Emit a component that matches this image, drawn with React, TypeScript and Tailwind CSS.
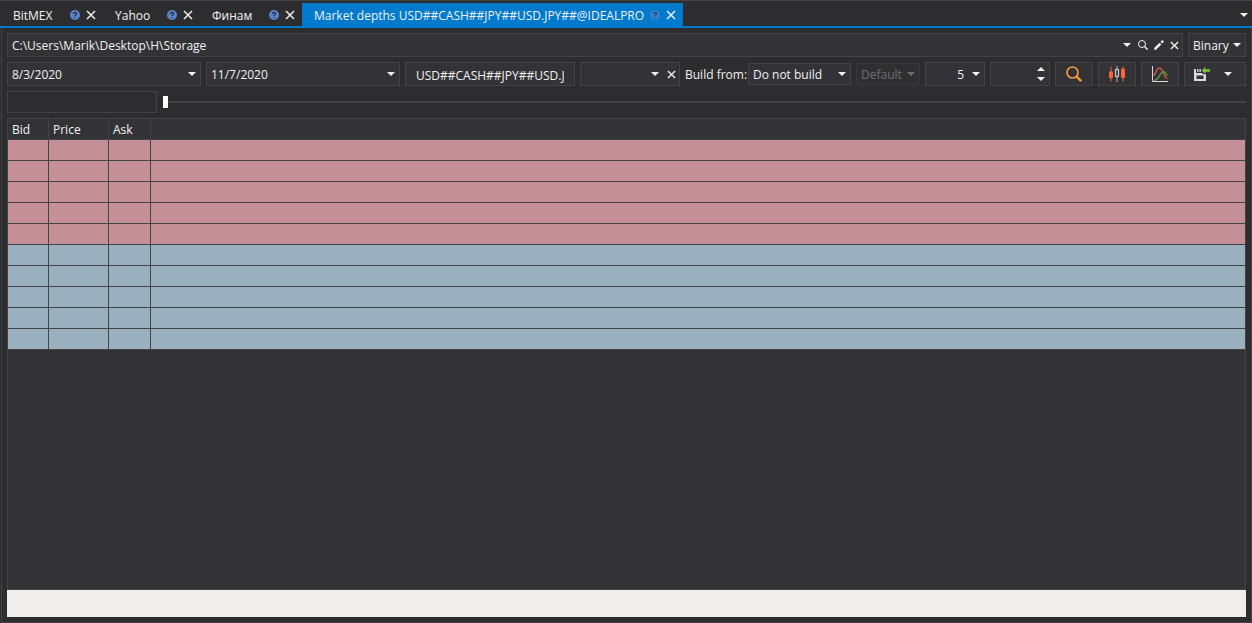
import type { ReactNode } from 'react';

const BOX = 'border border-[#434346] bg-[#333337]';
const FIELD = 'min-w-0 flex-1 bg-transparent pt-0.5 outline-none';

function Caret({ className = '' }: { className?: string }) {
  return (
    <svg className={`h-1 w-2 shrink-0 ${className}`} viewBox="0 0 8 4" fill="currentColor" aria-hidden="true">
      <path d="M0 0h8L4 4z" />
    </svg>
  );
}

function Cross({ className = 'size-[9px]' }: { className?: string }) {
  return (
    <svg className={className} viewBox="0 0 10 10" fill="none" stroke="currentColor" strokeWidth="1.5" aria-hidden="true">
      <path d="M1 1l8 8M9 1L1 9" />
    </svg>
  );
}

function HelpIcon() {
  return (
    <svg className="size-2.5" viewBox="0 0 10 10" aria-hidden="true">
      <circle cx="5" cy="5" r="5" fill="#5b83c9" />
      <path d="M3.4 3.9C3.4 2 6.6 2 6.6 3.8C6.6 4.9 5 4.8 5 6.1M5 6.9v1.2" fill="none" stroke="#252c3d" strokeWidth="1.2" />
    </svg>
  );
}

function Tab({ label, width, active = false }: { label: string; width: string; active?: boolean }) {
  return (
    <div className={`flex h-[23px] items-center pr-[7px] pl-3 ${width} ${active ? 'bg-[#007acc]' : ''}`}>
      <button type="button" role="tab" aria-selected={active} className="min-w-0 flex-1 pt-0.5 text-left whitespace-nowrap">
        {label}
      </button>
      <button type="button" aria-label={`Help: ${label}`} className={`mr-1.5 shrink-0 ${active ? 'opacity-60' : ''}`}>
        <HelpIcon />
      </button>
      <button type="button" aria-label={`Close ${label}`} className="shrink-0">
        <Cross className="size-2.5" />
      </button>
    </div>
  );
}

function DateBox({ label, value }: { label: string; value: string }) {
  return (
    <div className={`flex h-6 min-w-0 flex-1 items-center pr-1 pl-1 ${BOX}`}>
      <input aria-label={label} defaultValue={value} className={FIELD} />
      <button type="button" aria-label={`Open ${label} calendar`}>
        <Caret />
      </button>
    </div>
  );
}

function Select({
  id,
  label,
  options,
  className,
  disabled = false,
}: {
  id: string;
  label?: string;
  options: string[];
  className: string;
  disabled?: boolean;
}) {
  return (
    <div className={`relative shrink-0 ${className}`}>
      <select
        id={id}
        aria-label={label}
        disabled={disabled}
        className="size-full appearance-none bg-transparent pt-0.5 pl-1 outline-none"
      >
        {options.map((o) => (
          <option key={o} className="bg-[#333337]">
            {o}
          </option>
        ))}
      </select>
      <Caret className="pointer-events-none absolute top-1/2 right-1 -translate-y-1/2" />
    </div>
  );
}

function ToolButton({ label, children }: { label: string; children: ReactNode }) {
  return (
    <button type="button" aria-label={label} className={`flex h-6 w-[38px] shrink-0 items-center justify-center ${BOX}`}>
      {children}
    </button>
  );
}

function Tabs() {
  return (
    <header className="flex items-end border-t border-b-2 border-t-[#434346] border-b-[#007acc] pt-0.5 pl-px">
      <div role="tablist" className="flex flex-1">
        <Tab label="BitMEX" width="w-[102px]" />
        <Tab label="Yahoo" width="w-[97px]" />
        <Tab label="Финам" width="w-[102px]" />
        <Tab label="Market depths USD##CASH##JPY##USD.JPY##@IDEALPRO" width="w-[381px]" active />
      </div>
      <button type="button" aria-label="All tabs" className="flex h-[23px] items-center pr-1">
        <Caret />
      </button>
    </header>
  );
}

function StorageRow() {
  return (
    <div className="flex gap-[5px]">
      <div className={`flex h-6 min-w-0 flex-1 items-center pr-[3px] pl-1 ${BOX}`}>
        <input aria-label="Storage path" defaultValue="C:\Users\Marik\Desktop\H\Storage" className={FIELD} />
        <button type="button" aria-label="Recent paths" className="mr-[7px]">
          <Caret />
        </button>
        <button type="button" aria-label="Search" className="mr-1.5">
          <svg className="size-2.5" viewBox="0 0 10 10" fill="none" stroke="currentColor" aria-hidden="true">
            <circle cx="4" cy="4" r="3.5" />
            <path d="M6.6 6.6L9.6 9.6" strokeWidth="1.4" />
          </svg>
        </button>
        <button type="button" aria-label="Edit" className="mr-1.5">
          <svg className="size-2.5" viewBox="0 0 10 10" fill="currentColor" aria-hidden="true">
            <path d="M0 10l.6-2.4L5.6 2.700l1.700 1.700L2.400 9.400zM6.500 1.800L7.900.4c.3-.3.7-.3 1 0l.7.7c.3.3.3.7 0 1L8.200 3.500z" />
          </svg>
        </button>
        <button type="button" aria-label="Clear path">
          <Cross />
        </button>
      </div>
      <Select id="storage-format" label="Storage format" options={['Binary', 'CSV']} className={`h-6 w-[58px] ${BOX}`} />
    </div>
  );
}

function Toolbar() {
  return (
    <div className="flex items-center gap-[5px]">
      <DateBox label="From date" value="8/3/2020" />
      <DateBox label="To date" value="11/7/2020" />
      <input
        aria-label="Security"
        defaultValue="USD##CASH##JPY##USD.JPY##@IDEALPRO"
        className={`h-6 w-[170px] shrink-0 px-2.5 pt-0.5 outline-none ${BOX}`}
      />
      <div className={`flex h-6 w-[100px] shrink-0 items-center pr-[3px] pl-1 ${BOX}`}>
        <input aria-label="Filter" className={FIELD} />
        <button type="button" aria-label="Open filter list" className="mr-2">
          <Caret />
        </button>
        <button type="button" aria-label="Clear filter">
          <Cross />
        </button>
      </div>
      <label htmlFor="build-source" className="w-[58px] shrink-0 pt-0.5 whitespace-nowrap">
        Build from:
      </label>
      <Select id="build-source" options={['Do not build', 'Ticks', 'Order log']} className={`h-[22px] w-[103px] ${BOX}`} />
      <Select
        id="build-field"
        label="Build field"
        options={['Default']}
        disabled
        className="h-[22px] w-16 border border-[#38383a] bg-[#2f2f31] text-[#6f6f72]"
      />
      <div className={`flex h-6 w-[60px] shrink-0 items-center pr-1 pl-1 ${BOX}`}>
        <input aria-label="Depth" defaultValue="5" className={`text-right ${FIELD}`} />
        <button type="button" aria-label="Open depth list" className="ml-2">
          <Caret />
        </button>
      </div>
      <div className={`flex h-6 w-[60px] shrink-0 items-center pr-1 pl-1 ${BOX}`}>
        <input aria-label="Interval" className={FIELD} />
        <div className="flex flex-col gap-1.5">
          <button type="button" aria-label="Increase">
            <Caret className="block rotate-180" />
          </button>
          <button type="button" aria-label="Decrease">
            <Caret className="block" />
          </button>
        </div>
      </div>
      <ToolButton label="Find">
        <svg className="size-4" viewBox="0 0 16 16" fill="none" stroke="#f09a3e" aria-hidden="true">
          <circle cx="6.5" cy="6.5" r="5.5" strokeWidth="1.7" />
          <path d="M10.5 10.5l4.7 4.7" strokeWidth="2.4" />
        </svg>
      </ToolButton>
      <ToolButton label="Candles">
        <svg className="size-4" viewBox="0 0 16 16" aria-hidden="true">
          <path d="M2 .5v15M14 .5v15" stroke="#b5503b" strokeWidth="1.5" />
          <rect x="0" y="5.500" width="4" height="6.500" rx="1" fill="#ff6338" />
          <rect x="12" y="2.500" width="4" height="9.500" rx="1" fill="#ff6338" />
          <path d="M8 0v16" stroke="#8c8c8e" strokeWidth="1.5" />
          <rect x="6.500" y="3.500" width="3" height="7" rx=".5" fill="#333337" stroke="#c4c4c6" strokeWidth="1.3" />
        </svg>
      </ToolButton>
      <ToolButton label="Chart">
        <svg className="size-4" viewBox="0 0 16 16" fill="none" aria-hidden="true">
          <path d="M1.5 9.500C4 7.500 4.500 2 7.500 2C11 2 11.500 12 15.500 12.500" stroke="#d0573c" strokeWidth="1.4" />
          <path d="M2 14.5C7 14 8.500 5.500 11.500 5.500C13.500 5.500 13.500 9 15.500 9.500" stroke="#5f9a40" strokeWidth="1.4" />
          <path d="M.5 0v15.5H16" stroke="#d8d8d8" />
        </svg>
      </ToolButton>
      <button
        type="button"
        aria-label="Export"
        className={`flex h-6 w-[62px] shrink-0 items-center gap-3.5 pl-[9px] ${BOX}`}
      >
        <svg className="h-3.5 w-4 shrink-0" viewBox="0 0 16 14" aria-hidden="true">
          <path
            fill="#dcdcdc"
            fillRule="evenodd"
            d="M0 2h2v4h6l1 1.300H12V14H0zM2.500 8.500V12H9.500V8.500zM3.200 2h1.300v3H3.200zM5.500 2h1.300v3H5.500z"
          />
          <path d="M7.800 3.500L11.500 0v2.300H16v2.400h-4.500V7z" fill="#7cc43a" />
        </svg>
        <Caret />
      </button>
    </div>
  );
}

function TimeRow() {
  return (
    <div className="flex items-center gap-1.5">
      <input aria-label="Time" className="h-[22px] w-[150px] shrink-0 border border-[#434346] bg-[#2d2d30] px-1 outline-none" />
      <input
        type="range"
        aria-label="Position"
        min={0}
        max={100}
        defaultValue={0}
        className="h-3 min-w-0 flex-1 appearance-none bg-transparent outline-none [&::-webkit-slider-runnable-track]:h-0.5 [&::-webkit-slider-runnable-track]:bg-[#434346] [&::-webkit-slider-thumb]:-mt-[5px] [&::-webkit-slider-thumb]:h-3 [&::-webkit-slider-thumb]:w-[5px] [&::-webkit-slider-thumb]:appearance-none [&::-webkit-slider-thumb]:bg-white"
      />
    </div>
  );
}

const LEVELS = ['ask', 'ask', 'ask', 'ask', 'ask', 'bid', 'bid', 'bid', 'bid', 'bid'];

function DepthTable() {
  return (
    <div className="flex-1 border border-[#434346] bg-[#333337]">
      <table className="w-full table-fixed border-separate border-spacing-0">
        <colgroup>
          <col className="w-[41px]" />
          <col className="w-[60px]" />
          <col className="w-[42px]" />
          <col />
        </colgroup>
        <thead>
          <tr className="h-[21px]">
            {['Bid', 'Price', 'Ask'].map((h) => (
              <th key={h} className="border-r border-b border-[#434346] p-0 pt-0.5 pl-1 text-left font-normal">
                {h}
              </th>
            ))}
            <td className="border-b border-[#434346] p-0" />
          </tr>
        </thead>
        <tbody>
          {LEVELS.map((side, i) => (
            <tr key={i} className={`h-[21px] ${side === 'ask' ? 'bg-[#c48f97]' : 'bg-[#9bb0bf]'}`}>
              <td className="border-r border-b border-[#434346] p-0" />
              <td className="border-r border-b border-[#434346] p-0" />
              <td className="border-r border-b border-[#434346] p-0" />
              <td className="border-b border-[#434346] p-0" />
            </tr>
          ))}
        </tbody>
      </table>
    </div>
  );
}

export default function App() {
  return (
    <div className="flex min-h-screen flex-col bg-[#2d2d30] font-['Open_Sans','Noto_Sans',sans-serif] text-xs leading-4 text-[#f1f1f1]">
      <Tabs />
      <main className="ml-px flex flex-1 flex-col gap-[5px] border-x border-b border-[#434346] p-[5px]">
        <StorageRow />
        <Toolbar />
        <TimeRow />
        <div className="flex flex-1 flex-col">
          <DepthTable />
          <div role="status" className="h-[27px] bg-[#f1edec]" />
        </div>
      </main>
    </div>
  );
}
